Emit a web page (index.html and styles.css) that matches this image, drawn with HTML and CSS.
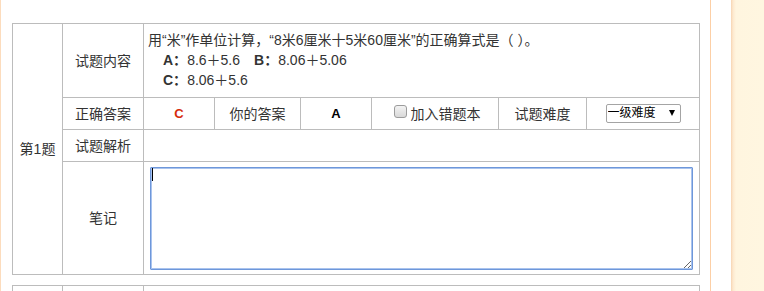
FILE: index.html
```html
<!DOCTYPE html>
<html lang="zh-CN">
<head>
<meta charset="utf-8">
<title>试题</title>
<link rel="stylesheet" href="styles.css">
</head>
<body>
<div class="page">
  <main class="main">
    <div class="q">
      <div class="cell num">第1题</div>
      <div class="cell label">试题内容</div>
      <div class="cell content">
        <div class="stem">用“米”作单位计算，“8米6厘米十5米60厘米”的正确算式是（ ）。</div>
        <div class="opts"><span class="opt"><b>A：</b>8.6＋5.6</span><span class="opt"><b>B：</b>8.06＋5.06</span></div>
        <div class="opts"><span class="opt"><b>C：</b>8.06＋5.6</span></div>
      </div>
      <div class="cell label">正确答案</div>
      <div class="cell center right-ans">C</div>
      <div class="cell center">你的答案</div>
      <div class="cell center my-ans">A</div>
      <div class="cell center"><label class="chk"><input type="checkbox" class="box">加入错题本</label></div>
      <div class="cell center">试题难度</div>
      <div class="cell center">
        <span class="sel-wrap">
          <select class="sel"><option>一级难度</option><option>二级难度</option><option>三级难度</option></select>
          <span class="arrow"></span>
        </span>
      </div>
      <div class="cell label">试题解析</div>
      <div class="cell wide"></div>
      <div class="cell label">笔记</div>
      <div class="cell wide note">
        <textarea class="ta"></textarea>
        <span class="caret"></span>
      </div>
    </div>
    <div class="q q2">
      <div class="cell num"></div>
      <div class="cell label"></div>
      <div class="cell wide"></div>
    </div>
  </main>
  <aside class="side"></aside>
</div>
</body>
</html>
```

FILE: styles.css
```css
html, body {
  margin: 0;
  padding: 0;
  background: #fff;
}
body {
  font-family: "Liberation Sans", "Noto Sans CJK SC", sans-serif;
  font-size: 14px;
  color: #333;
}
.page {
  display: flex;
  height: 291px;
  overflow: hidden;
}
.main {
  box-sizing: border-box;
  width: 711px;
  flex: none;
  border-left: 1px solid #fcdcbd;
  border-right: 1px solid #fccfa6;
  padding: 23px 10px 0 11px;
}
.side {
  flex: none;
  width: 33px;
  margin-left: 20px;
  background: linear-gradient(to right, #f7d4b2 0, #fde9cf 2px, #fff5df 5px, #fff6e0 100%);
}
.q {
  display: grid;
  grid-template-columns: 49px 80px 70px 85px 70px 126px 87px 112px;
  grid-template-rows: 73px 31px 31px 112px;
  gap: 1px;
  background: #bcbcbc;
  border: 1px solid #bcbcbc;
  width: 686px;
}
.q2 {
  margin-top: 10px;
  grid-template-rows: 60px;
}
.cell {
  background: #fff;
  display: flex;
  align-items: center;
  min-width: 0;
}
.num {
  grid-row: 1 / 5;
  justify-content: center;
  padding-bottom: 2px;
}
.q2 .num { grid-row: auto; }
.label {
  justify-content: center;
  padding-bottom: 2px;
}
.center {
  justify-content: center;
  padding-bottom: 1px;
}
.content {
  grid-column: 3 / 9;
  flex-direction: column;
  align-items: flex-start;
  justify-content: center;
  padding-left: 4px;
  padding-bottom: 2px;
  line-height: 20px;
}
.opts {
  padding-left: 15px;
}
.opt {
  margin-right: 14px;
}
.opt b {
  font-weight: bold;
  color: #333;
}
.wide {
  grid-column: 3 / 9;
}
.right-ans {
  color: #d62c0c;
  font-weight: bold;
  font-size: 13px;
}
.my-ans {
  color: #000;
  font-weight: bold;
  font-size: 13px;
}
.chk {
  display: inline-flex;
  align-items: center;
}
.box {
  appearance: none;
  -webkit-appearance: none;
  width: 13px;
  height: 13px;
  box-sizing: border-box;
  margin: -4px 4px 0 4px;
  border: 1px solid #9c9c9c;
  border-radius: 3px;
  background: linear-gradient(#f3f3f3, #d9d9d9);
}
.sel-wrap {
  position: relative;
  display: inline-block;
  width: 75px;
  height: 19px;
}
.sel {
  appearance: none;
  -webkit-appearance: none;
  width: 75px;
  height: 19px;
  box-sizing: border-box;
  border: 1px solid #a4a4a4;
  border-radius: 2px;
  background: #fff;
  color: #000;
  font-family: "Liberation Sans", "Noto Sans CJK SC", sans-serif;
  font-size: 12px;
  padding: 0 0 0 1px;
  margin: 0;
  line-height: 17px;
}
.arrow {
  position: absolute;
  left: 63px;
  top: 6px;
  width: 0;
  height: 0;
  border-left: 3.5px solid transparent;
  border-right: 3.5px solid transparent;
  border-top: 6px solid #000;
  pointer-events: none;
}
.note {
  position: relative;
  padding: 0 6px;
}
.ta {
  display: block;
  box-sizing: border-box;
  width: 100%;
  height: 103px;
  margin: 0;
  border: 1px solid #6e97da;
  box-shadow: 0 0 0 1px #a9c3ee inset;
  border-radius: 1px;
  outline: none;
  background: #fff;
  font-family: "Liberation Sans", "Noto Sans CJK SC", sans-serif;
  font-size: 14px;
}
.caret {
  position: absolute;
  left: 8px;
  top: 6px;
  width: 1px;
  height: 13px;
  background: #000;
}
```
